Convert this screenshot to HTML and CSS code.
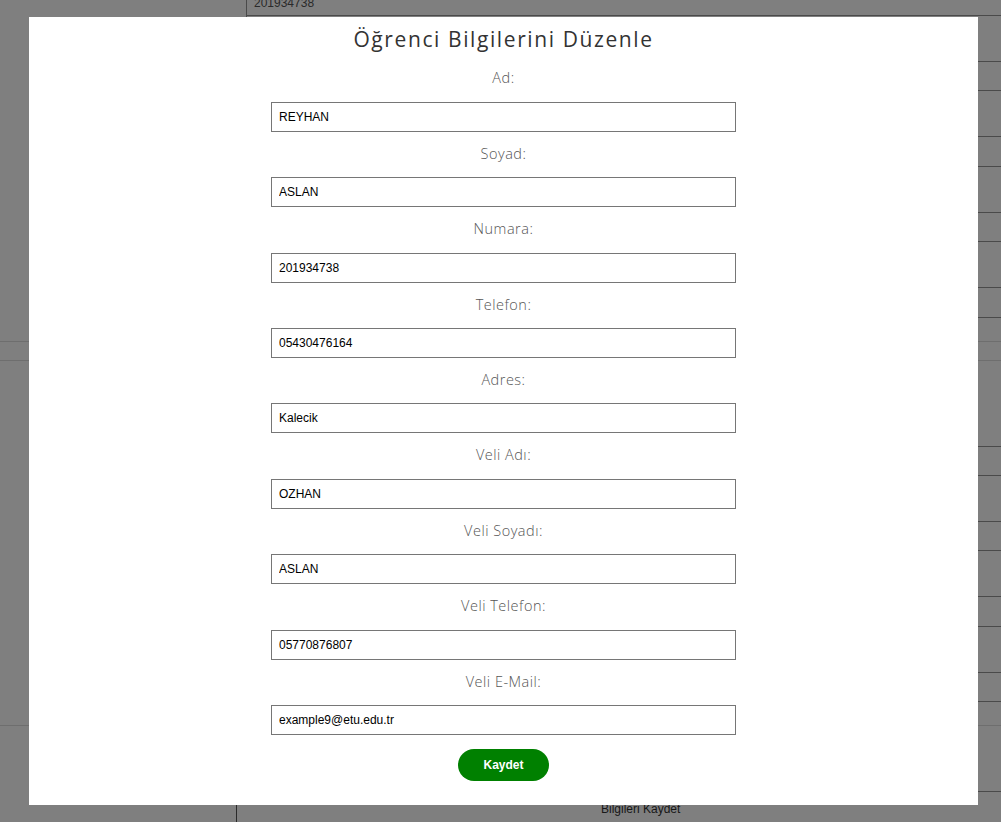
FILE: index.html
```html
<!DOCTYPE html>
<html lang="tr">
<head>
<meta charset="utf-8">
<title>Öğrenci Bilgilerini Düzenle</title>
<link rel="stylesheet" href="styles.css">
</head>
<body>
<div class="page">
  <div class="sec-a">
    <div class="row r-top"><span class="cell-text">201934738</span></div>
    <div class="row tall"></div>
    <div class="row short"></div>
    <div class="row tall"></div>
    <div class="row short2"></div>
    <div class="row tall"></div>
    <div class="row short"></div>
    <div class="row tall"></div>
    <div class="row short2"></div>
  </div>
  <div class="gap-a"></div>
  <div class="light-row"></div>
  <div class="sec-b">
    <div class="row head-b"></div>
    <div class="row short"></div>
    <div class="row tall"></div>
    <div class="row short"></div>
    <div class="row tall"></div>
    <div class="row short2"></div>
    <div class="row tall"></div>
    <div class="row short"></div>
  </div>
  <div class="gap-b"></div>
  <div class="sec-c">
    <div class="row tall-c"></div>
  </div>
  <div class="sec-d">
    <div class="bottom-cell"><span class="cell-text">Bilgileri Kaydet</span></div>
  </div>
</div>

<div class="overlay"></div>

<div class="modal">
  <h2 class="modal-title">Öğrenci Bilgilerini Düzenle</h2>
  <form class="edit-form">
    <label class="field-label" for="ad">Ad:</label>
    <input class="field-input" id="ad" type="text" value="REYHAN">
    <label class="field-label" for="soyad">Soyad:</label>
    <input class="field-input" id="soyad" type="text" value="ASLAN">
    <label class="field-label" for="numara">Numara:</label>
    <input class="field-input" id="numara" type="text" value="201934738">
    <label class="field-label" for="telefon">Telefon:</label>
    <input class="field-input" id="telefon" type="text" value="05430476164">
    <label class="field-label" for="adres">Adres:</label>
    <input class="field-input" id="adres" type="text" value="Kalecik">
    <label class="field-label" for="veliadi">Veli Adı:</label>
    <input class="field-input" id="veliadi" type="text" value="OZHAN">
    <label class="field-label" for="velisoyadi">Veli Soyadı:</label>
    <input class="field-input" id="velisoyadi" type="text" value="ASLAN">
    <label class="field-label" for="velitel">Veli Telefon:</label>
    <input class="field-input" id="velitel" type="text" value="05770876807">
    <label class="field-label" for="velimail">Veli E-Mail:</label>
    <input class="field-input" id="velimail" type="text" value="example9@etu.edu.tr">
    <button class="save-btn" type="button">Kaydet</button>
  </form>
</div>
</body>
</html>
```

FILE: styles.css
```css
* { box-sizing: border-box; }

html, body {
  margin: 0;
  padding: 0;
  width: 1001px;
  height: 822px;
  overflow: hidden;
  background: #ffffff;
  font-family: "Liberation Sans", Arial, sans-serif;
}

/* ---------- background page (under the overlay) ---------- */
.page {
  width: 1001px;
}

.sec-a {
  margin-left: 246px;
  border-left: 1px solid #949494;
}

.row {
  border-bottom: 1px solid #949494;
}

.r-top {
  height: 19px;
  padding-left: 7px;
}

.r-top .cell-text {
  display: block;
  margin-top: -3px;
  font-size: 12px;
  line-height: 12px;
  color: #555555;
}

.tall { height: 46px; }
.short { height: 29px; }
.short2 { height: 30px; }

.gap-a { height: 23px; }

.light-row {
  height: 20px;
  border-top: 1px solid #dcdcdc;
  border-bottom: 1px solid #dcdcdc;
}

.sec-b {
  margin-left: 246px;
}

.head-b { height: 86px; }

.gap-b { height: 23px; }

.sec-c {
  border-top: 1px solid #dcdcdc;
  padding-left: 246px;
}

.tall-c { height: 66px; }

.sec-d {
  padding-left: 236px;
}

.bottom-cell {
  border-left: 1px solid #555555;
  height: 40px;
  padding-left: 364px;
  padding-top: 7px;
}

.bottom-cell .cell-text {
  font-size: 12px;
  color: #333333;
}

/* ---------- overlay + modal ---------- */
.overlay {
  position: fixed;
  inset: 0;
  background: rgba(0, 0, 0, 0.5);
}

.modal {
  position: fixed;
  left: 29px;
  top: 17px;
  width: 949px;
  height: 788px;
  background: #ffffff;
  display: flex;
  flex-direction: column;
  align-items: center;
}

.modal-title {
  margin: 7px 0 0;
  height: 30px;
  line-height: 30px;
  font-family: "Open Sans", "Noto Sans", sans-serif;
  font-weight: 500;
  font-size: 21px;
  color: #333333;
  letter-spacing: 1.6px;
}

.edit-form {
  width: 465px;
  display: flex;
  flex-direction: column;
  align-items: center;
}

.field-label {
  display: block;
  margin: 11px 0 13px;
  height: 21.4px;
  line-height: 21.4px;
  font-family: "Open Sans", "Noto Sans", sans-serif;
  font-weight: 300;
  font-size: 14.5px;
  color: #555555;
  letter-spacing: 0.5px;
  text-align: center;
}

.edit-form .field-label:first-child {
  margin-top: 13.4px;
}

.field-input {
  display: block;
  width: 465px;
  height: 30px;
  margin: 0;
  padding: 0 7px;
  border: 1px solid #767676;
  border-radius: 0;
  background: #ffffff;
  font-family: "Liberation Sans", Arial, sans-serif;
  font-size: 12px;
  color: #000000;
  outline: none;
}

.save-btn {
  margin-top: 14px;
  width: 91px;
  height: 32px;
  border: none;
  border-radius: 16px;
  background: #008000;
  color: #ffffff;
  font-family: "Liberation Sans", Arial, sans-serif;
  font-weight: bold;
  font-size: 12px;
  cursor: pointer;
}
```
